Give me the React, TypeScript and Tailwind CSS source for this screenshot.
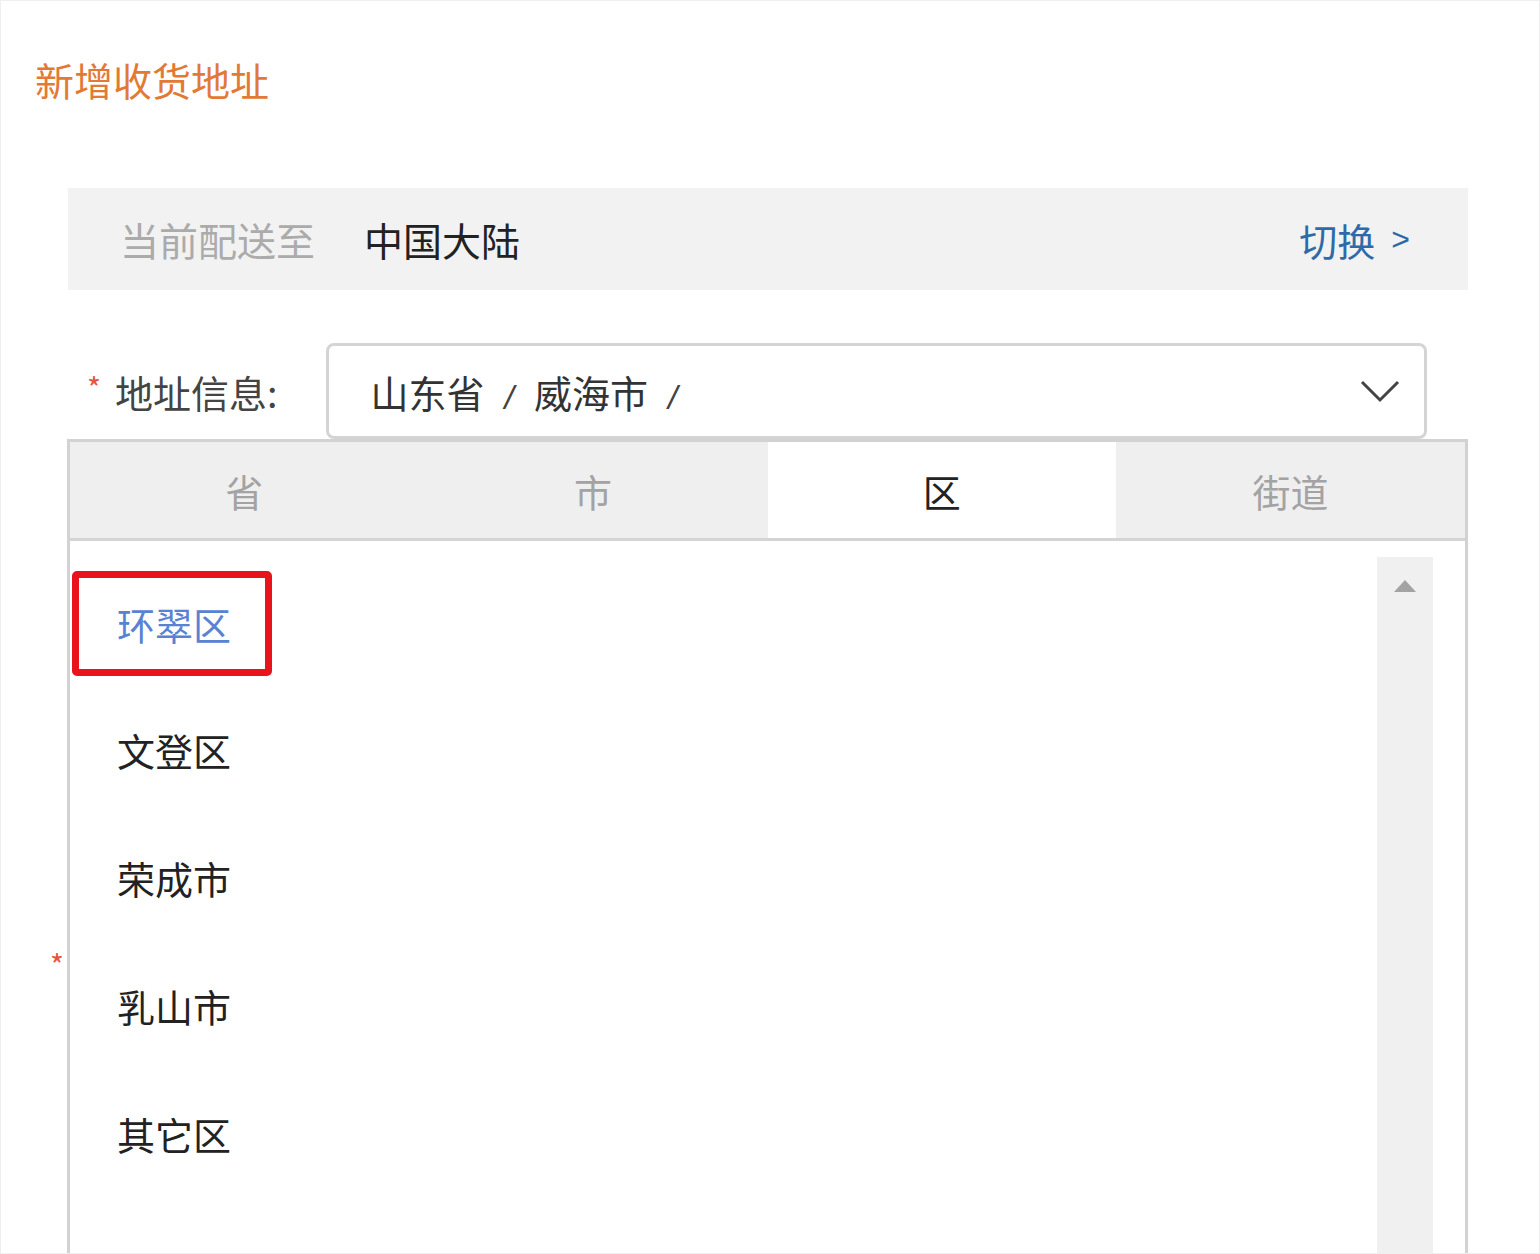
const districts = ["环翠区", "文登区", "荣成市", "乳山市", "其它区"];
const tabs = ["省", "市", "区", "街道"];

export default function App() {
  return (
    <div className="relative w-[1540px] h-[1254px] overflow-hidden bg-white border border-[#efefef] font-['Noto_Sans_CJK_SC',sans-serif]">
      <div className="pl-[34px] pt-[57px] text-[39px] leading-[42px] text-[#e27a35]">
        新增收货地址
      </div>

      <div className="mt-[88px] ml-[67px] w-[1400px] h-[102px] bg-[#f2f2f2] flex items-center pl-[52px] pr-[58px]">
        <span className="text-[39px] text-[#ababab]">当前配送至</span>
        <span className="ml-[49px] text-[39px] text-[#222]">中国大陆</span>
        <span className="ml-auto flex items-center text-[#2f6aa8]">
          <span className="text-[38px]">切换</span>
          <span className="ml-[16px] text-[32px] font-['Liberation_Sans',sans-serif]">&gt;</span>
        </span>
      </div>

      <div className="relative">
        <div className="mt-[53px] flex items-center pl-[86px]">
          <span className="text-[30px] text-[#e8553f] -mt-[8px]">*</span>
          <span className="ml-[14px] text-[38px] text-[#444]">地址信息:</span>
          <div className="ml-[48px] w-[1101px] h-[96px] rounded-[8px] border-[3px] border-[#d4d4d4] flex items-center pl-[42px] pr-[24px]">
            <span className="text-[38px] text-[#333]">山东省</span>
            <span className="ml-[20px] mr-[20px] mt-[12px] text-[34px] italic text-[#444] font-['Liberation_Sans',sans-serif]">/</span>
            <span className="text-[38px] text-[#333]">威海市</span>
            <span className="ml-[20px] mt-[12px] text-[34px] italic text-[#444] font-['Liberation_Sans',sans-serif]">/</span>
            <svg className="ml-auto" width="40" height="24" viewBox="0 0 40 24">
              <polyline points="2,3 20,21 38,3" fill="none" stroke="#444" strokeWidth="3" />
            </svg>
          </div>
        </div>

        <div className="mt-[510px] pl-[49px] text-[30px] leading-[30px] text-[#e8553f]">*</div>

        <div className="absolute left-[66px] top-[96px] w-[1401px] h-[900px] bg-white border-[3px] border-[#d2d2d2]">
          <div className="flex h-[99px] bg-[#efefef] border-b-[3px] border-[#d4d4d4]">
            {tabs.map((t) => (
              <div
                key={t}
                className={
                  t === "区"
                    ? "flex-1 flex items-center justify-center bg-white text-[38px] text-[#222]"
                    : "flex-1 flex items-center justify-center text-[38px] text-[#a3a3a3]"
                }
              >
                {t}
              </div>
            ))}
          </div>

          <div className="flex pt-[16px] pr-[32px]">
            <div className="flex-1">
              {districts.map((d, i) =>
                i === 0 ? (
                  <div key={d} className="h-[128px] flex items-center">
                    <span className="ml-[2px] mt-[4px] inline-block border-[7px] border-[#e8131b] rounded-[5px] pl-[38px] pr-[34px] py-[24px] text-[38px] leading-[43px] text-[#5a82d2]">
                      {d}
                    </span>
                  </div>
                ) : (
                  <div key={d} className="h-[128px] flex items-center pl-[47px] text-[38px] text-[#222]">
                    {d}
                  </div>
                )
              )}
            </div>
            <div className="w-[56px] h-[800px] bg-[#f0f0f0] flex justify-center pt-[22px]">
              <svg width="24" height="14" viewBox="0 0 24 14">
                <polygon points="12,1 23,13 1,13" fill="#a3a3a3" />
              </svg>
            </div>
          </div>
        </div>
      </div>
    </div>
  );
}
